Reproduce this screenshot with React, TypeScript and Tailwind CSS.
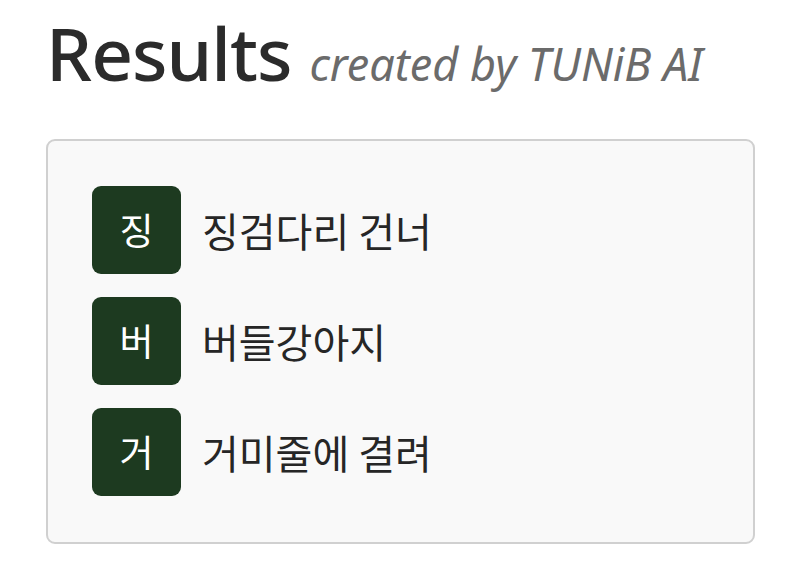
export default function App() {
  const rows = [
    { initial: '징', text: '징검다리 건너' },
    { initial: '버', text: '버들강아지' },
    { initial: '거', text: '거미줄에 결려' },
  ];

  return (
    <div className="min-h-screen bg-white px-[46px] pt-[5px] font-['Noto_Sans','Noto_Sans_CJK_KR',sans-serif]">
      {/* Title */}
      <div className="flex items-baseline gap-[18px]">
        <h1 className="text-[73px] leading-[96px] font-medium tracking-[-1px] text-[#2b2b2b]">Results</h1>
        <span className="text-[45px] italic text-[#6b6b6b]">created by TUNiB AI</span>
      </div>

      {/* Results box */}
      <div className="mt-[38px] w-[709px] rounded-[9px] border-2 border-[#d0d0d0] bg-[#f9f9f9] px-[44px] pt-[45px] pb-[46px]">
        <div className="flex flex-col gap-[23px]">
          {rows.map((row) => (
            <div key={row.initial} className="flex items-center gap-[21px]">
              <div className="flex h-[88px] w-[89px] items-center justify-center rounded-[9px] bg-[#1d3a20] font-['Noto_Sans_CJK_KR',sans-serif] text-[37px] text-white">
                {row.initial}
              </div>
              <span className="font-['Noto_Sans_CJK_KR',sans-serif] text-[40px] text-[#262626]">{row.text}</span>
            </div>
          ))}
        </div>
      </div>
    </div>
  );
}
